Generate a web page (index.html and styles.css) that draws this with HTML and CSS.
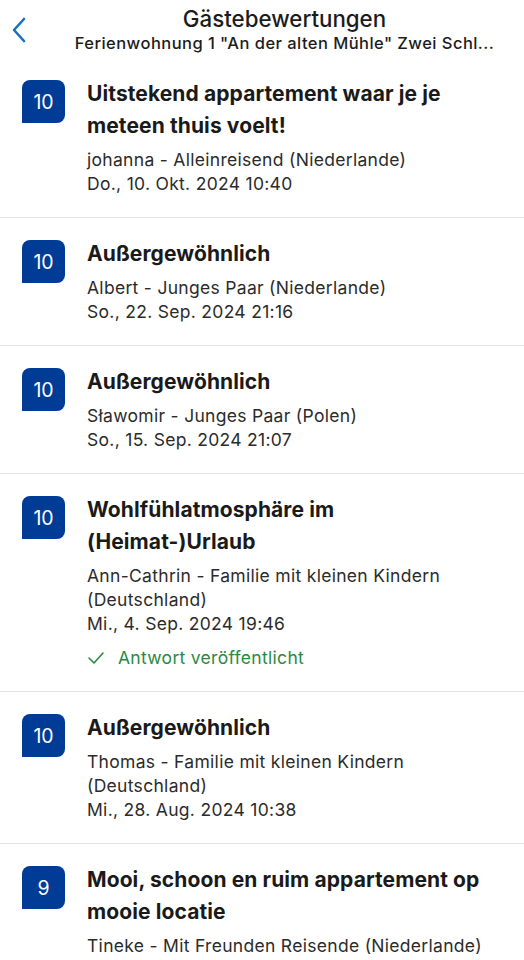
FILE: index.html
```html
<!DOCTYPE html>
<html lang="de">
<head>
  <meta charset="UTF-8">
  <meta name="viewport" content="width=device-width, initial-scale=1.0">
  <title>Gästebewertungen</title>
  <link rel="stylesheet" href="styles.css">
</head>
<body>
  <!-- Kopfzeile -->
  <div class="topbar">
    <a class="back" href="#">
      <svg width="18" height="28" viewBox="0 0 18 28"><path d="M14 3 L4 14 L14 25" fill="none" stroke="#1a6fc0" stroke-width="2.6" stroke-linecap="round" stroke-linejoin="round"/></svg>
    </a>
    <div class="titles">
      <div class="title">Gästebewertungen</div>
      <div class="subtitle">Ferienwohnung 1 "An der alten Mühle" Zwei Schl...</div>
    </div>
  </div>

  <!-- Bewertungen -->
  <div class="reviews">
    <div class="review">
      <div class="score">10</div>
      <div class="body">
        <div class="headline">Uitstekend appartement waar je je meteen thuis voelt!</div>
        <div class="meta">johanna - Alleinreisend (Niederlande)</div>
        <div class="meta">Do., 10. Okt. 2024 10:40</div>
      </div>
    </div>

    <div class="review">
      <div class="score">10</div>
      <div class="body">
        <div class="headline">Außergewöhnlich</div>
        <div class="meta">Albert - Junges Paar (Niederlande)</div>
        <div class="meta">So., 22. Sep. 2024 21:16</div>
      </div>
    </div>

    <div class="review">
      <div class="score">10</div>
      <div class="body">
        <div class="headline">Außergewöhnlich</div>
        <div class="meta">Sławomir - Junges Paar (Polen)</div>
        <div class="meta">So., 15. Sep. 2024 21:07</div>
      </div>
    </div>

    <div class="review">
      <div class="score">10</div>
      <div class="body">
        <div class="headline">Wohlfühlatmosphäre im (Heimat-)Urlaub</div>
        <div class="meta">Ann-Cathrin - Familie mit kleinen Kindern (Deutschland)</div>
        <div class="meta">Mi., 4. Sep. 2024 19:46</div>
        <div class="answered">
          <svg width="18" height="14" viewBox="0 0 18 14"><path d="M2 7 L7 12 L16 2" fill="none" stroke="#2a8a3e" stroke-width="1.6" stroke-linecap="round" stroke-linejoin="round"/></svg>
          Antwort veröffentlicht
        </div>
      </div>
    </div>

    <div class="review">
      <div class="score">10</div>
      <div class="body">
        <div class="headline">Außergewöhnlich</div>
        <div class="meta">Thomas - Familie mit kleinen Kindern (Deutschland)</div>
        <div class="meta">Mi., 28. Aug. 2024 10:38</div>
      </div>
    </div>

    <div class="review">
      <div class="score">9</div>
      <div class="body">
        <div class="headline">Mooi, schoon en ruim appartement op mooie locatie</div>
        <div class="meta">Tineke - Mit Freunden Reisende (Niederlande)</div>
      </div>
    </div>
  </div>
</body>
</html>
```

FILE: styles.css
```css
body {
  margin: 0;
  font-family: Inter, "Noto Sans", sans-serif;
  background: #fff;
  color: #1a1a1a;
  height: 960px;
  overflow: hidden;
}
.topbar {
  position: relative;
  height: 58px;
}
.back {
  position: absolute;
  left: 10px;
  top: 16px;
}
.titles {
  padding-left: 45px;
  text-align: center;
}
.title {
  padding-top: 5px;
  font-size: 22.3px;
  line-height: 27px;
  font-weight: 500;
  color: #1c1c1c;
}
.subtitle {
  font-size: 16.5px;
  line-height: 23px;
  font-weight: 500;
  letter-spacing: 0.45px;
  color: #1c1c1c;
  white-space: nowrap;
}
.review {
  display: flex;
  gap: 22px;
  padding: 20px 30px 21px 22px;
  border-bottom: 1px solid #e4e4e4;
}
.review:last-child {
  border-bottom: none;
  padding-bottom: 0;
}
.score {
  flex: none;
  width: 43px;
  height: 43px;
  margin-top: 2px;
  background: #003b95;
  color: #fff;
  border-radius: 8px 8px 8px 0;
  display: flex;
  align-items: center;
  justify-content: center;
  font-size: 19.5px;
}
.body {
  flex: 1;
}
.headline {
  font-size: 21px;
  line-height: 32px;
  font-weight: 700;
  letter-spacing: 0.1px;
  color: #1a1a1a;
  margin-bottom: 6px;
}
.meta {
  font-size: 17.5px;
  line-height: 24px;
  letter-spacing: 0.3px;
  color: #2b2b2b;
}
.answered {
  display: flex;
  align-items: center;
  gap: 13px;
  margin-top: 10px;
  font-size: 17.5px;
  line-height: 24px;
  letter-spacing: 0.3px;
  color: #2a8a3e;
}
```
